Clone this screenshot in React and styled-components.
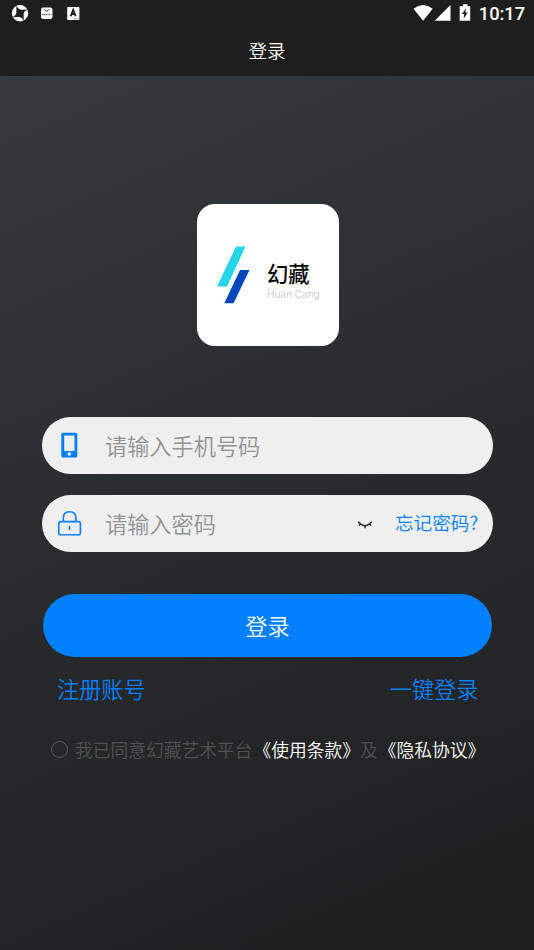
import React from "react";
import styled, { createGlobalStyle } from "styled-components";

const Global = createGlobalStyle`
  * { box-sizing: border-box; }
  body { margin: 0; background: #1e1e1e; }
  button, input { font: inherit; border: 0; padding: 0; background: none; }
`;

const Screen = styled.div`
  width: 534px;
  height: 950px;
  display: flex;
  flex-direction: column;
  overflow: hidden;
  font-family: "Noto Sans CJK SC", sans-serif;
  font-weight: 350;
  text-spacing-trim: space-all;
  background: linear-gradient(157deg, #373d40 0%, #2c3032 38%, #262829 62%, #1e1e1f 100%);
`;

const Header = styled.header`
  height: 76px;
  flex: none;
  background: #1e1e1e;
`;

const StatusBar = styled.div`
  height: 26px;
  display: flex;
  justify-content: space-between;
  color: #fff;
`;

const Icon = styled.svg`
  display: block;
  flex: none;
`;

const Clock = styled.span`
  font: 500 18.2px/27px Roboto, sans-serif;
  padding-right: 9px;
`;

const StatusEnd = styled.div`
  display: flex;
  gap: 4px;
`;

const Title = styled.h1`
  margin: 0;
  height: 50px;
  font-size: 18.6px;
  line-height: 47px;
  font-weight: 350;
  text-align: center;
  color: #fff;
`;

const Logo = styled.div`
  width: 142px;
  height: 142px;
  margin: 128px 0 0 197px;
  flex: none;
  display: flex;
  border-radius: 18px;
  background: #fff;
`;

const Brand = styled.div`
  padding: 53px 0 0 16px;
  white-space: nowrap;
`;

const BrandName = styled.div`
  font-size: 21.3px;
  line-height: 31px;
  font-weight: 500;
  color: #080808;
`;

const BrandLatin = styled.div`
  font: 300 10.1px/12px Inter, sans-serif;
  color: #c4c4c4;
`;

const Form = styled.form`
  display: flex;
  flex-direction: column;
  margin: 71px 41px 0 42px;
`;

const Field = styled.label`
  height: 57px;
  margin-bottom: 21px;
  display: flex;
  align-items: center;
  border-radius: 29px;
  background: #efefef;
`;

const Input = styled.input`
  width: ${(p) => p.$width}px;
  height: 40px;
  margin: -2px 0 0 23px;
  outline: 0;
  font-size: 22.2px;
  color: #222;
  &::placeholder { color: #929295; opacity: 1; }
`;

const Link = styled.button`
  font-size: ${(p) => p.$size}px;
  line-height: 32px;
  color: #0080ff;
  white-space: nowrap;
`;

const ForgotLink = styled(Link)`
  margin: -3px 0 0 22px;
`;

const Submit = styled.button`
  && {
    height: 63px;
    margin: 21px 1px 0;
    border-radius: 32px;
    background: #0080ff;
    color: #fff;
    font-size: 22.2px;
    line-height: 63px;
  }
`;

const Links = styled.div`
  display: flex;
  justify-content: space-between;
  padding: 15px 14.5px 0 15px;
`;

const Agreement = styled.div`
  display: flex;
  align-items: center;
  height: 28px;
  margin-top: 31px;
  padding-left: 9px;
  font-size: 17.75px;
  line-height: 28px;
  white-space: nowrap;
  color: #505152;
`;

const Radio = styled.span`
  width: 17px;
  height: 17px;
  margin-right: 7px;
  flex: none;
  border: 1px solid #5a5b5c;
  border-radius: 50%;
`;

const Policy = styled.span`
  margin-left: 1px;
  color: #fff;
`;

export default function App() {
  return (
    <Screen>
      <Global />
      <Header>
        <StatusBar>
          <Icon width="100" height="26" viewBox="0 0 100 26">
            <circle cx="20" cy="13.3" r="8.2" fill="#fff" />
            <path d="M16.3 5.6Q18.2 9.6 21 9.7L27.7 9.6Q23.6 11.4 23.6 14.2L23.8 21Q21.8 17 19 16.9L12.3 17.1Q16.4 15.2 16.4 12.4Z" fill="#1e1e1e" />
            <rect x="41" y="7.5" width="11.5" height="11.5" rx="2.2" fill="#fff" />
            <path d="M44.1 9.2Q46.7 13.1 49.3 9.2" fill="none" stroke="#333" strokeWidth="1" />
            <path d="M42 14.5H51.5" stroke="#777" strokeWidth="1.4" strokeDasharray="1.3 .5" />
            <rect x="67.2" y="7" width="12.2" height="13" rx=".7" fill="#fff" />
            <path d="M70.7 16.3L73.2 9.7L75.7 16.3M71.8 14.1H74.8" fill="none" stroke="#1e1e1e" strokeWidth="1.8" />
            <path d="M73.5 18.3H78.5" stroke="#777" strokeWidth=".8" strokeDasharray="1 .5" />
          </Icon>
          <StatusEnd>
            <Icon width="62" height="26" viewBox="0 0 62 26">
              <path d="M.5 8.7Q10 1.3 19.7 8.7L10.1 20.8Z" fill="#fff" />
              <path d="M37.5 5V20.8H21.7Z" fill="#fff" />
              <path d="M50 4.3H54.5V6.2H57.2V20.8H46.7V6.2H50Z" fill="#fff" />
              <path d="M52.9 8.2L49 14H51.2L50.6 18.7L54.7 12.4H52.4Z" fill="#1e1e1e" />
            </Icon>
            <Clock>10:17</Clock>
          </StatusEnd>
        </StatusBar>
        <Title>登录</Title>
      </Header>
      <Logo>
        <Icon width="54" height="142" viewBox="0 0 54 142">
          <path d="M39 42.5H48.5L30 82.5H20Z" fill="#25d5e9" />
          <path d="M43 66H52.5L36.5 99.3H27.3Z" fill="#0047b9" />
        </Icon>
        <Brand>
          <BrandName>幻藏</BrandName>
          <BrandLatin>Huan Cang</BrandLatin>
        </Brand>
      </Logo>
      <Form onSubmit={(e) => e.preventDefault()}>
        <Field>
          <Icon width="40" height="57" viewBox="0 0 40 57">
            <rect x="19.3" y="15.8" width="16" height="24.7" rx="1.5" fill="#0080ff" />
            <path d="M22.2 18.5H32.5V34H22.2Z" fill="#efefef" />
            <circle cx="27.3" cy="37" r="1.8" fill="#efefef" />
          </Icon>
          <Input $width={300} placeholder="请输入手机号码" />
        </Field>
        <Field>
          <Icon width="40" height="57" viewBox="0 0 40 57" fill="none" stroke="#0080ff" strokeWidth="1.6">
            <rect x="16.8" y="26.6" width="21.6" height="13.2" rx="1.8" />
            <path d="M21.3 26.4V23.2Q21.3 16.7 27.6 16.7Q34 16.7 34 23.2V26.4M27.5 31V35" />
          </Icon>
          <Input $width={252} type="password" placeholder="请输入密码" />
          <Icon width="16" height="57" viewBox="0 0 16 57" fill="none" stroke="#303030" strokeWidth="1.4">
            <path d="M1.2 26.8Q8 34.6 14.8 26.8M3.4 28.6L2 30.6M8 30.5V33.2M12.6 28.6L14 30.6" />
          </Icon>
          <ForgotLink type="button" $size={18.6}>忘记密码?</ForgotLink>
        </Field>
        <Submit>登录</Submit>
        <Links>
          <Link type="button" $size={22.2}>注册账号</Link>
          <Link type="button" $size={22.2}>一键登录</Link>
        </Links>
        <Agreement>
          <Radio />
          我已同意幻藏艺术平台<Policy>《使用条款》</Policy>及<Policy>《隐私协议》</Policy>
        </Agreement>
      </Form>
    </Screen>
  );
}
